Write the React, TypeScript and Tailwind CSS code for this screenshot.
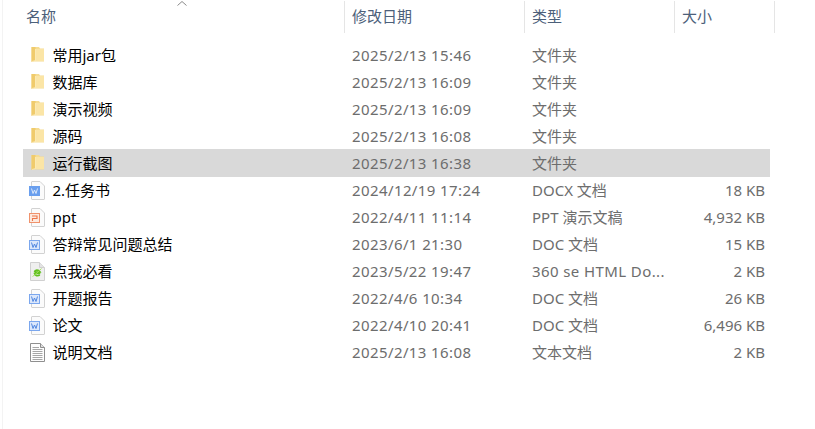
import React from 'react';

type Kind = 'folder' | 'docx' | 'doc' | 'ppt' | 'html' | 'text';

const files: { name: string; date: string; type: string; size: string; kind: Kind; selected?: boolean }[] = [
    { name: '常用jar包', date: '2025/2/13 15:46', type: '文件夹', size: '', kind: 'folder' },
    { name: '数据库', date: '2025/2/13 16:09', type: '文件夹', size: '', kind: 'folder' },
    { name: '演示视频', date: '2025/2/13 16:09', type: '文件夹', size: '', kind: 'folder' },
    { name: '源码', date: '2025/2/13 16:08', type: '文件夹', size: '', kind: 'folder' },
    { name: '运行截图', date: '2025/2/13 16:38', type: '文件夹', size: '', kind: 'folder', selected: true },
    { name: '2.任务书', date: '2024/12/19 17:24', type: 'DOCX 文档', size: '18 KB', kind: 'docx' },
    { name: 'ppt', date: '2022/4/11 11:14', type: 'PPT 演示文稿', size: '4,932 KB', kind: 'ppt' },
    { name: '答辩常见问题总结', date: '2023/6/1 21:30', type: 'DOC 文档', size: '15 KB', kind: 'doc' },
    { name: '点我必看', date: '2023/5/22 19:47', type: '360 se HTML Do...', size: '2 KB', kind: 'html' },
    { name: '开题报告', date: '2022/4/6 10:34', type: 'DOC 文档', size: '26 KB', kind: 'doc' },
    { name: '论文', date: '2022/4/10 20:41', type: 'DOC 文档', size: '6,496 KB', kind: 'doc' },
    { name: '说明文档', date: '2025/2/13 16:08', type: '文本文档', size: '2 KB', kind: 'text' },
];

function Sheet() {
    return (
        <path
            d="M2.5 1C2.5 0.7 2.8 0.5 3 0.5H11L15.5 5V18C15.5 18.3 15.3 18.5 15 18.5H3C2.8 18.5 2.5 18.3 2.5 18Z"
            fill="#fbfbfb"
            stroke="#d2d2d2"
        />
    );
}

function FileIcon({ kind }: { kind: Kind }) {
    if (kind === 'folder') {
        return (
            <svg width="14" height="17" viewBox="0 0 14 17" className="shrink-0 ml-[8px] mb-[2px]">
                <path d="M0.5 1H8L9 2.5H13V15.5H0.5Z" fill="#f6dc92" />
                <path d="M4.5 3H13V15H3.5L4.5 14Z" fill="#fbe5a6" />
                <path d="M0.5 1H4.5V14.5L0.5 16Z" fill="#f0cb6c" />
                <path d="M1 15.5L4.5 14.5V3" fill="none" stroke="#fdf0c8" strokeWidth="0.7" />
            </svg>
        );
    }
    if (kind === 'docx') {
        return (
            <svg width="17" height="19" viewBox="0 0 17 19" className="shrink-0 ml-[6px]">
                <Sheet />
                <rect x="0" y="5" width="11" height="10" fill="#6a9fee" />
                <path d="M2.5 7.5L4 12.5L5.5 9L7 12.5L8.5 7.5" fill="none" stroke="#dbe8fb" strokeWidth="1" />
            </svg>
        );
    }
    if (kind === 'doc') {
        return (
            <svg width="17" height="19" viewBox="0 0 17 19" className="shrink-0 ml-[6px]">
                <Sheet />
                <rect x="0.5" y="5.5" width="10" height="9" fill="#dbe7fb" stroke="#7ba7ee" />
                <path d="M2.5 7.5L4 12.5L5.5 9L7 12.5L8.5 7.5" fill="none" stroke="#4f86e0" strokeWidth="1" />
            </svg>
        );
    }
    if (kind === 'ppt') {
        return (
            <svg width="17" height="19" viewBox="0 0 17 19" className="shrink-0 ml-[6px]">
                <Sheet />
                <rect x="0.5" y="5.5" width="10" height="9" fill="#fdeadf" stroke="#f0926c" />
                <path d="M3 8H8V10.5H3.5V13" fill="none" stroke="#ec764a" strokeWidth="1.1" />
            </svg>
        );
    }
    if (kind === 'html') {
        return (
            <svg width="17" height="19" viewBox="0 0 17 19" className="shrink-0 ml-[6px]">
                <path d="M1.5 0.5H10.5L15.5 5.5V18.5H1.5Z" fill="#efefef" stroke="#d0d0d0" />
                <path d="M10.5 0.5V5.5H15.5" fill="#e4e4e4" stroke="#d0d0d0" />
                <path d="M11.3 11.5H5.5C5.8 13.8 8.8 14.4 10.8 12.9M5.5 10C5.8 7.8 9.6 7.4 11 10H5.5" fill="none" stroke="#62c021" strokeWidth="1.7" />
                <path d="M3.5 14.5C6 13 10 9 12.5 6.5" fill="none" stroke="#a5e25c" strokeWidth="0.9" />
            </svg>
        );
    }
    return (
        <svg width="17" height="19" viewBox="0 0 17 19" className="shrink-0 ml-[6px]">
            <path d="M1.5 0.5H11.5L15.5 4.5V18.5H1.5Z" fill="#fdfdfd" stroke="#8f8f8f" />
            <path d="M11.5 0.5V4.5H15.5" fill="#e0e0e0" stroke="#8f8f8f" />
            <path d="M3.5 4.5H10M3.5 6.5H13.5M3.5 8.5H13.5M3.5 10.5H13.5M3.5 12.5H13.5M3.5 14.5H13.5M3.5 16.5H13.5" stroke="#a6a6a6" />
        </svg>
    );
}

export default function App() {
    return (
        <div className="w-[815px] h-[429px] overflow-hidden bg-white text-[15px] font-['Noto_Sans','Noto_Sans_CJK_SC',sans-serif] relative">
            <div className="ml-[2px] h-full border-l border-[#f3f3f3] pt-[1px]">
                {/* Sort arrow */}
                <svg width="10" height="5" viewBox="0 0 10 5" className="absolute left-[177px] top-[1px]">
                    <path d="M0.5 4.5L5 0.5L9.5 4.5" fill="none" stroke="#8a8a8a" />
                </svg>

                {/* Header */}
                <div className="flex h-[32px] text-[#4c607a] leading-[30px]">
                    <div className="w-[342px] pl-[23px] border-r border-[#e5e5e5]">名称</div>
                    <div className="w-[180px] pl-[7px] border-r border-[#e5e5e5]">修改日期</div>
                    <div className="w-[150px] pl-[7px] border-r border-[#e5e5e5]">类型</div>
                    <div className="w-[100px] pl-[7px] border-r border-[#e5e5e5]">大小</div>
                </div>

                {/* Rows */}
                <div className="mt-[8px] ml-[20px] w-[747px]">
                    {files.map((f) => (
                        <div
                            key={f.name}
                            className={`flex items-center h-[27px] ${f.selected ? 'bg-[#d9d9d9] h-[28px] -mb-[1px]' : 'pt-[1px]'}`}
                        >
                            <div className="w-[321px] flex items-center">
                                <FileIcon kind={f.kind} />
                                <span className={`text-black ${f.kind === 'folder' ? 'ml-[7.5px]' : 'ml-[6.5px]'}`}>{f.name}</span>
                            </div>
                            <div className="w-[180px] pl-[8px] text-[#6d6d6d] tracking-[0.4px]">{f.date}</div>
                            <div className={`w-[150px] pl-[8px] text-[#6d6d6d] whitespace-nowrap ${f.kind === 'html' ? 'tracking-[0.4px]' : ''}`}>{f.type}</div>
                            <div className="w-[91px] text-right text-[#6d6d6d]">{f.size}</div>
                        </div>
                    ))}
                </div>
            </div>
        </div>
    );
}
